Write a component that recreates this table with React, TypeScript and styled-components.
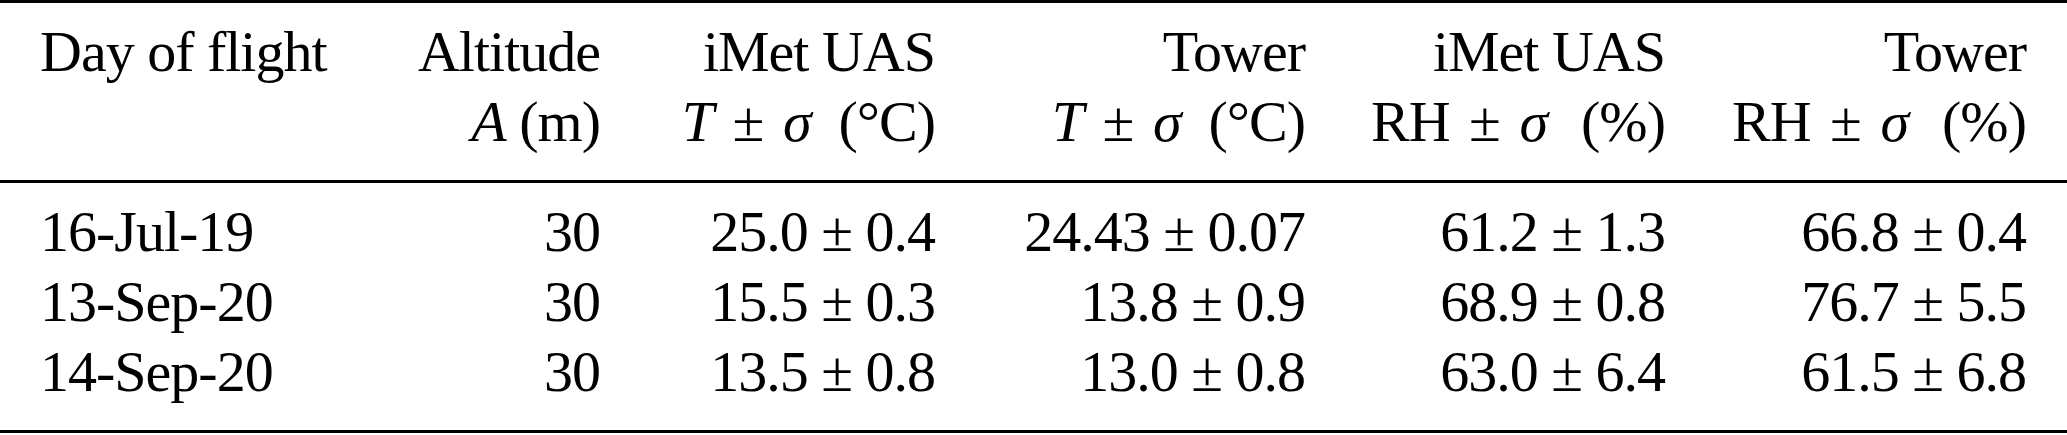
import React from "react";
import styled, { createGlobalStyle } from "styled-components";

const GlobalStyle = createGlobalStyle`
  html, body {
    margin: 0;
    padding: 0;
    background: #ffffff;
  }
  body {
    font-family: "Liberation Serif", "Times New Roman", serif;
    color: #000000;
  }
`;

const TableWrap = styled.section`
  width: 2067px;
  border-top: 3px solid #000;
  border-bottom: 3px solid #000;
  font-size: 58px;
  line-height: 70px;
  letter-spacing: -1px;
`;

const Grid = styled.div<{ $top: number; $bottom: number; $ruled?: boolean }>`
  display: grid;
  grid-template-columns: 300px 260px 335px 370px 360px 361px;
  padding: ${(p) => p.$top}px 41px ${(p) => p.$bottom}px 40px;
  border-bottom: ${(p) => (p.$ruled ? "3px solid #000" : "none")};
`;

const Cell = styled.div<{ $left?: boolean }>`
  text-align: ${(p) => (p.$left ? "left" : "right")};
  white-space: nowrap;
`;

const Var = styled.i`
  font-style: italic;
`;

// binary-operator spacing, a bit wider than a word space as in the typeset header
const PlusMinus = styled.span`
  margin: 0 6px;
`;

const Unit = styled.span<{ $wide?: boolean }>`
  margin-left: ${(p) => (p.$wide ? 34 : 28)}px;
`;

type Row = [string, string, string, string, string, string];

const rows: Row[] = [
  ["16-Jul-19", "30", "25.0 ± 0.4", "24.43 ± 0.07", "61.2 ± 1.3", "66.8 ± 0.4"],
  ["13-Sep-20", "30", "15.5 ± 0.3", "13.8 ± 0.9", "68.9 ± 0.8", "76.7 ± 5.5"],
  ["14-Sep-20", "30", "13.5 ± 0.8", "13.0 ± 0.8", "63.0 ± 6.4", "61.5 ± 6.8"],
];

const TempHead: React.FC<{ source: string }> = ({ source }) => (
  <Cell>
    {source}
    <br />
    <Var>T</Var> <PlusMinus>±</PlusMinus> <Var>σ</Var>
    <Unit>(°C)</Unit>
  </Cell>
);

const HumidityHead: React.FC<{ source: string }> = ({ source }) => (
  <Cell>
    {source}
    <br />
    RH <PlusMinus>±</PlusMinus> <Var>σ</Var>
    <Unit $wide>(%)</Unit>
  </Cell>
);

const App: React.FC = () => {
  return (
    <>
      <GlobalStyle />
      <TableWrap>
        <Grid $top={14} $bottom={23} $ruled>
          <Cell $left>Day of flight</Cell>
          <Cell>
            Altitude
            <br />
            <Var>A</Var> (m)
          </Cell>
          <TempHead source="iMet UAS" />
          <TempHead source="Tower" />
          <HumidityHead source="iMet UAS" />
          <HumidityHead source="Tower" />
        </Grid>
        <Grid $top={14} $bottom={23}>
          {rows.map((row) =>
            row.map((value, i) => (
              <Cell key={row[0] + i} $left={i === 0}>
                {value}
              </Cell>
            ))
          )}
        </Grid>
      </TableWrap>
    </>
  );
};

export default App;
